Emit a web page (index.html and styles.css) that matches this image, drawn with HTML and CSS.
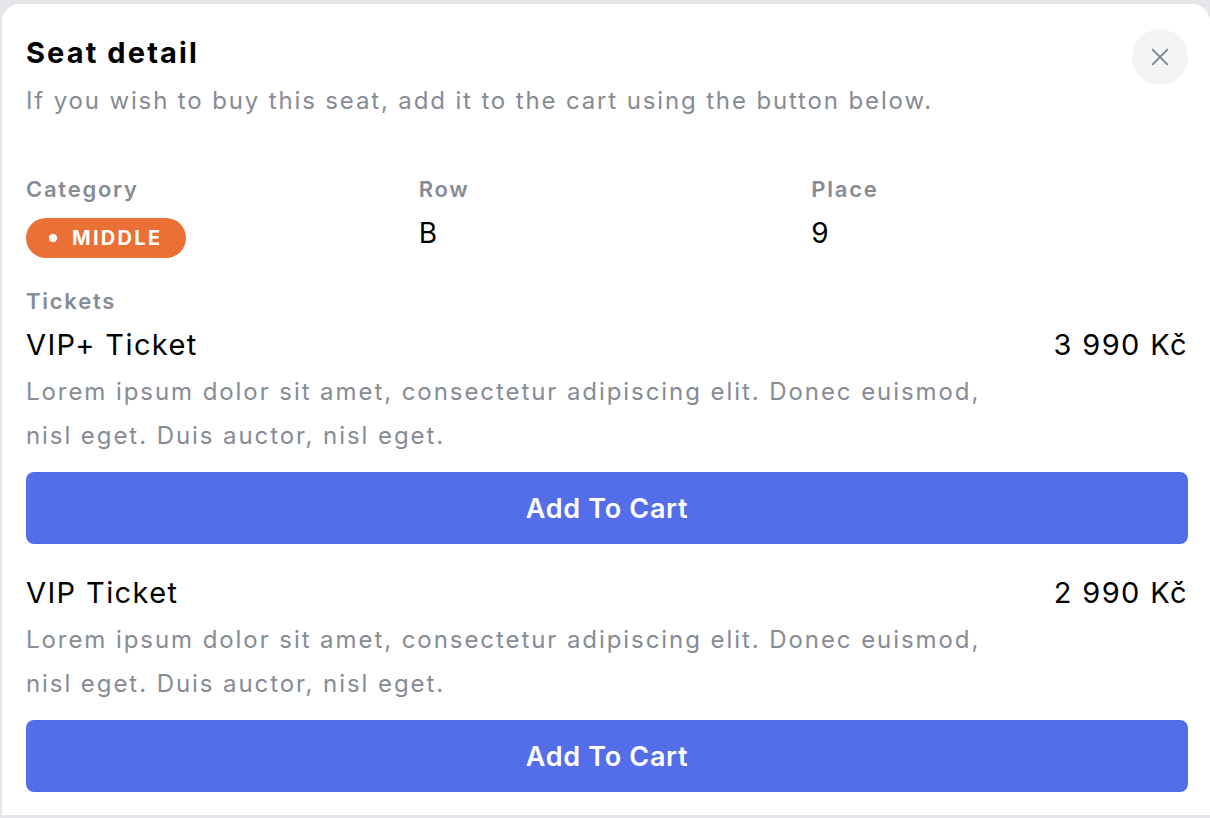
FILE: index.html
```html
<!DOCTYPE html>
<html lang="en">
<head>
<meta charset="utf-8">
<title>Seat detail</title>
<link rel="stylesheet" href="styles.css">
</head>
<body>
<div class="modal">
  <header class="head">
    <div class="head-text">
      <h1 class="title">Seat detail</h1>
      <p class="subtitle">If you wish to buy this seat, add it to the cart using the button below.</p>
    </div>
    <button class="close" aria-label="Close">
      <svg width="22" height="22" viewBox="0 0 24 24" fill="none" stroke="currentColor" stroke-width="2" stroke-linecap="round"><path d="M4 4L20 20M20 4L4 20"/></svg>
    </button>
  </header>

  <div class="info">
    <div class="info-col">
      <div class="label">Category</div>
      <span class="badge"><span class="dot"></span>MIDDLE</span>
    </div>
    <div class="info-col">
      <div class="label">Row</div>
      <div class="value">B</div>
    </div>
    <div class="info-col">
      <div class="label">Place</div>
      <div class="value">9</div>
    </div>
  </div>

  <div class="label tickets-label">Tickets</div>
  <div class="ticket">
    <div class="ticket-head">
      <span class="ticket-name">VIP+ Ticket</span>
      <span class="ticket-price">3 990 Kč</span>
    </div>
    <p class="ticket-desc">Lorem ipsum dolor sit amet, consectetur adipiscing elit. Donec euismod, nisl eget. Duis auctor, nisl eget.</p>
    <button class="cart-btn">Add To Cart</button>
  </div>
  <div class="ticket second">
    <div class="ticket-head">
      <span class="ticket-name">VIP Ticket</span>
      <span class="ticket-price">2 990 Kč</span>
    </div>
    <p class="ticket-desc">Lorem ipsum dolor sit amet, consectetur adipiscing elit. Donec euismod, nisl eget. Duis auctor, nisl eget.</p>
    <button class="cart-btn">Add To Cart</button>
  </div>
</div>
</body>
</html>
```

FILE: styles.css
```css
html, body {
  margin: 0;
  padding: 0;
  background: #e6e6ea;
  height: 100%;
  overflow: hidden;
}
body {
  font-family: Inter, "Noto Sans", "Liberation Sans", sans-serif;
  padding: 4px 0 0 2px;
  box-sizing: border-box;
}
.modal {
  background: #fff;
  border-radius: 18px 18px 0 0;
  width: 1208px;
  height: 811px;
  box-sizing: border-box;
  padding: 31px 22px 0 24px;
}
.head {
  display: flex;
  justify-content: space-between;
  align-items: flex-start;
}
.title {
  margin: 0;
  font-size: 29px;
  line-height: 36px;
  font-weight: 700;
  color: #000;
  letter-spacing: 2.1px;
}
.subtitle {
  margin: 14px 0 0;
  font-size: 24px;
  line-height: 32px;
  color: #868b94;
  letter-spacing: 1.86px;
}
.close {
  width: 56px;
  height: 56px;
  border-radius: 50%;
  border: none;
  background: #f3f4f6;
  color: #7d828b;
  display: flex;
  align-items: center;
  justify-content: center;
  padding: 0;
  margin-top: -6px;
}
.info {
  display: grid;
  grid-template-columns: repeat(3, 1fr);
  column-gap: 16px;
  margin-top: 58px;
}
.label {
  font-size: 22px;
  line-height: 28px;
  font-weight: 600;
  color: #878c95;
  letter-spacing: 1.75px;
}
.badge {
  display: inline-flex;
  align-items: center;
  margin-top: 15px;
  height: 40px;
  padding: 0 24px 0 23px;
  border-radius: 20px;
  background: #ea7035;
  color: #fff;
  font-size: 20px;
  font-weight: 700;
  letter-spacing: 2.3px;
  box-sizing: border-box;
}
.dot {
  width: 8px;
  height: 8px;
  border-radius: 50%;
  background: #fff;
  margin-right: 15px;
}
.value {
  font-size: 28px;
  line-height: 36px;
  color: #000;
  margin-top: 12px;
}
.tickets-label {
  margin-top: 29px;
}
.ticket {
  margin-top: 12px;
}
.ticket.second {
  margin-top: 31px;
}
.ticket-head {
  display: flex;
  justify-content: space-between;
  font-size: 29px;
  line-height: 36px;
  color: #000;
  letter-spacing: 1.4px;
}
.ticket-desc {
  margin: 7px 0 0;
  font-size: 24px;
  line-height: 44px;
  color: #868b94;
  max-width: 1000px;
  letter-spacing: 1.93px;
}
.cart-btn {
  display: block;
  width: 100%;
  height: 72px;
  margin-top: 14px;
  border: none;
  border-radius: 8px;
  background: #546de9;
  color: #fff;
  font-family: inherit;
  font-size: 27px;
  font-weight: 600;
  letter-spacing: 0.7px;
}
```
